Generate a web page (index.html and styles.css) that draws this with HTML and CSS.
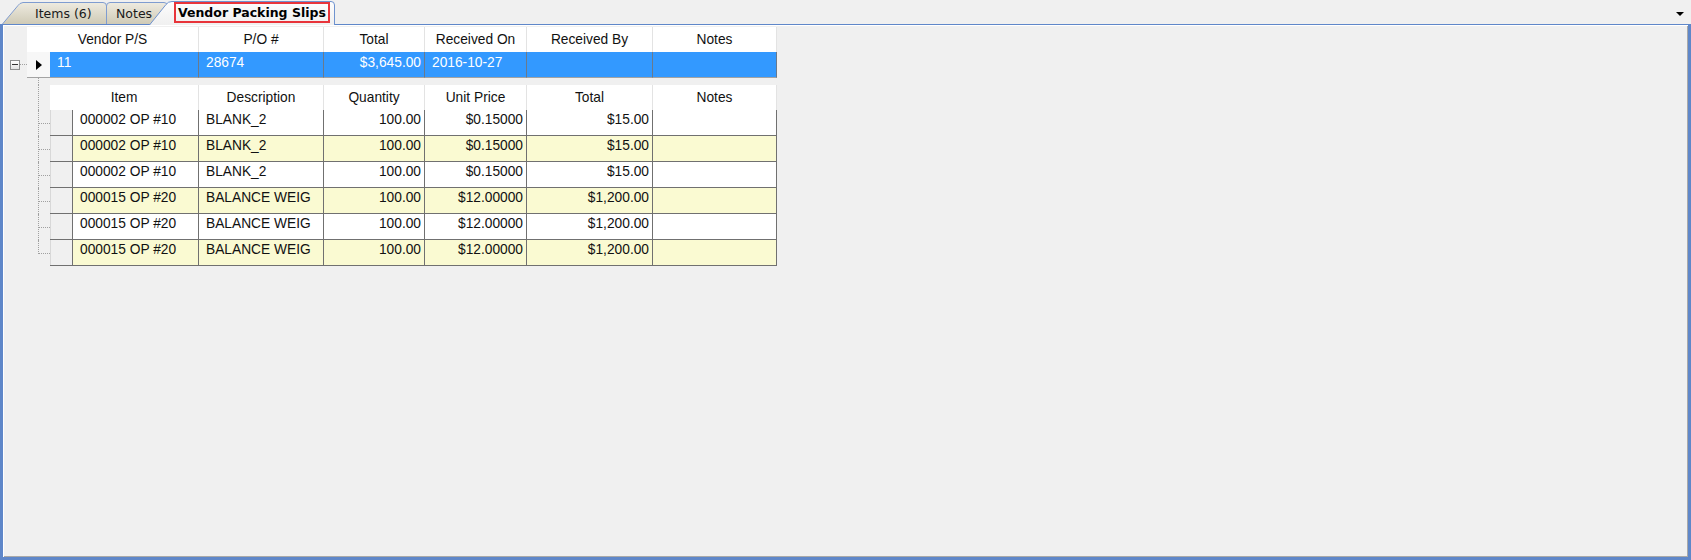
FILE: index.html
```html
<!DOCTYPE html>
<html lang="en">
<head>
  <meta charset="UTF-8">
  <meta name="viewport" content="width=device-width, initial-scale=1">
  <link rel="stylesheet" href="styles.css">
  <title>Vendor Packing Slips</title>
</head>
<body>
<div class="tabstrip">
  <div class="tab tab-items">
    <svg class="tab-shape" viewBox="0 0 105 22" preserveAspectRatio="none">
      <defs><linearGradient id="gItems" x1="0" y1="0" x2="0" y2="1"><stop offset="0" stop-color="#eeebe0"/><stop offset="1" stop-color="#cfcab6"/></linearGradient></defs>
      <path d="M0.5 22 L16 3.5 Q17.5 1 21 0.5 L101 0.5 Q104.5 0.5 104.5 4 L104.5 22" fill="url(#gItems)" stroke="#7f9cd0"/>
    </svg>
    <span class="tab-label">Items (6)</span>
  </div>
  <div class="tab tab-notes">
    <svg class="tab-shape" viewBox="0 0 62 22" preserveAspectRatio="none">
      <defs><linearGradient id="gNotes" x1="0" y1="0" x2="0" y2="1"><stop offset="0" stop-color="#eeebe0"/><stop offset="1" stop-color="#cfcab6"/></linearGradient></defs>
      <path d="M0.5 22 V4 Q0.5 0.5 4 0.5 H58 Q61.5 0.5 61.5 4 V22" fill="url(#gNotes)" stroke="#7f9cd0"/>
    </svg>
    <span class="tab-label">Notes</span>
  </div>
  <div class="tab tab-active">
    <svg class="tab-shape" viewBox="0 0 186 24" preserveAspectRatio="none">
      <defs><linearGradient id="gActive" x1="0" y1="0" x2="0" y2="1"><stop offset="0" stop-color="#fdfdfd"/><stop offset="1" stop-color="#f0f0f0"/></linearGradient></defs>
      <path d="M0.5 24 L17 3.5 Q19 0.5 23 0.5 H182 Q185.5 0.5 185.5 4 V24" fill="url(#gActive)" stroke="#6f93cf"/>
    </svg>
    <span class="tab-label">Vendor Packing Slips</span>
  </div>
  <span class="tab-menu"></span>
</div>

<div class="tab-page">
  <div class="master">
    <div class="expander"><span class="expand-box"></span><span class="tree-h"></span></div>
    <div class="mgrid">
      <div class="hcell wide">Vendor P/S</div>
      <div class="hcell">P/O #</div>
      <div class="hcell">Total</div>
      <div class="hcell">Received On</div>
      <div class="hcell">Received By</div>
      <div class="hcell">Notes</div>

      <div class="rowhead current"><span class="arrow"></span></div>
      <div class="mcell">11</div>
      <div class="mcell">28674</div>
      <div class="mcell num">$3,645.00</div>
      <div class="mcell">2016-10-27</div>
      <div class="mcell"></div>
      <div class="mcell"></div>
    </div>
  </div>

  <div class="detail">
    <div class="dline gap"><span class="tree"></span></div>
    <div class="dline">
      <span class="tree"></span>
      <div class="hcell wide">Item</div>
      <div class="hcell">Description</div>
      <div class="hcell">Quantity</div>
      <div class="hcell">Unit Price</div>
      <div class="hcell">Total</div>
      <div class="hcell">Notes</div>
    </div>
    <div class="dline">
      <span class="tree branch"></span>
      <div class="rowhead"></div>
      <div class="dcell">000002 OP #10</div>
      <div class="dcell">BLANK_2</div>
      <div class="dcell num">100.00</div>
      <div class="dcell num">$0.15000</div>
      <div class="dcell num">$15.00</div>
      <div class="dcell"></div>
    </div>
    <div class="dline alt">
      <span class="tree branch"></span>
      <div class="rowhead"></div>
      <div class="dcell">000002 OP #10</div>
      <div class="dcell">BLANK_2</div>
      <div class="dcell num">100.00</div>
      <div class="dcell num">$0.15000</div>
      <div class="dcell num">$15.00</div>
      <div class="dcell"></div>
    </div>
    <div class="dline">
      <span class="tree branch"></span>
      <div class="rowhead"></div>
      <div class="dcell">000002 OP #10</div>
      <div class="dcell">BLANK_2</div>
      <div class="dcell num">100.00</div>
      <div class="dcell num">$0.15000</div>
      <div class="dcell num">$15.00</div>
      <div class="dcell"></div>
    </div>
    <div class="dline alt">
      <span class="tree branch"></span>
      <div class="rowhead"></div>
      <div class="dcell">000015 OP #20</div>
      <div class="dcell">BALANCE WEIG</div>
      <div class="dcell num">100.00</div>
      <div class="dcell num">$12.00000</div>
      <div class="dcell num">$1,200.00</div>
      <div class="dcell"></div>
    </div>
    <div class="dline">
      <span class="tree branch"></span>
      <div class="rowhead"></div>
      <div class="dcell">000015 OP #20</div>
      <div class="dcell">BALANCE WEIG</div>
      <div class="dcell num">100.00</div>
      <div class="dcell num">$12.00000</div>
      <div class="dcell num">$1,200.00</div>
      <div class="dcell"></div>
    </div>
    <div class="dline alt">
      <span class="tree branch last"></span>
      <div class="rowhead"></div>
      <div class="dcell">000015 OP #20</div>
      <div class="dcell">BALANCE WEIG</div>
      <div class="dcell num">100.00</div>
      <div class="dcell num">$12.00000</div>
      <div class="dcell num">$1,200.00</div>
      <div class="dcell"></div>
    </div>
  </div>
</div>
</body>
</html>
```

FILE: styles.css
```css
* {
  margin: 0;
  padding: 0;
  box-sizing: border-box;
}
html, body {
  width: 1691px;
  height: 560px;
  overflow: hidden;
}
body {
  background: #f0f0f0;
  font-family: "Liberation Sans", Arial, sans-serif;
  font-size: 13.75px;
  color: #111;
  display: flex;
  flex-direction: column;
}

/* tab strip */
.tabstrip {
  height: 24px;
  display: flex;
  align-items: flex-end;
  padding-left: 2px;
  position: relative;
  z-index: 1;
}
.tab {
  position: relative;
  height: 22px;
  display: flex;
  align-items: center;
  font-family: "DejaVu Sans", Verdana, sans-serif;
  font-size: 12.5px;
  color: #1a1a1a;
}
.tab-shape {
  position: absolute;
  left: 0;
  top: 0;
  width: 100%;
  height: 100%;
}
.tab-label {
  position: relative;
}
.tab-items {
  width: 105px;
  padding-left: 33px;
  padding-top: 1px;
  z-index: 2;
}
.tab-notes {
  width: 62px;
  margin-left: -1px;
  padding-left: 10px;
  padding-top: 1px;
  z-index: 1;
}
.tab-active {
  width: 186px;
  height: 24px;
  margin-left: -19px;
  margin-bottom: -1px;
  padding-left: 25px;
  align-items: flex-start;
  z-index: 3;
}
.tab-active .tab-label {
  margin-top: 1px;
  height: 21px;
  padding: 0 2px;
  line-height: 17px;
  font-weight: bold;
  color: #000;
  border: 2px solid #e8343a;
}
.tab-menu {
  margin-left: auto;
  margin-right: 7px;
  align-self: flex-start;
  margin-top: 12px;
  border-top: 4px solid #000;
  border-left: 4px solid transparent;
  border-right: 4px solid transparent;
}

/* tab page */
.tab-page {
  flex: 1;
  border: 3px solid #5f87c9;
  border-top: 1px solid #5f87c9;
  background: #f0f0f0;
  box-shadow: inset 1px 1px #fff, inset -1px -1px #a9a9a9;
  padding-top: 2px;
}
.master {
  display: flex;
}
.expander {
  width: 24px;
  height: 25px;
  margin-top: 25px;
  padding-left: 7px;
  display: flex;
  align-items: center;
}
.expand-box {
  width: 10px;
  height: 10px;
  border: 1px solid #8e8f8f;
  background: linear-gradient(#fff, #e2e2e2);
  position: relative;
}
.expand-box::after {
  content: "";
  position: absolute;
  left: 1px;
  right: 1px;
  top: 3px;
  height: 1px;
  background: #333;
}
.tree-h {
  flex: 1;
  border-top: 1px dotted #a0a0a0;
}

.mgrid {
  display: grid;
  grid-template-columns: 23px 149px 125px 101px 102px 126px 124px;
}
.hcell {
  height: 25px;
  background: #fff;
  border-right: 1px solid #e3e3e3;
  display: flex;
  align-items: center;
  justify-content: center;
  white-space: nowrap;
}
.hcell.wide {
  grid-column: span 2;
}
.rowhead {
  background: #f0f0f0;
  border-right: 1px solid #707070;
  border-bottom: 1px solid #707070;
  box-shadow: inset 1px 0 #d8d8d8;
}
.rowhead.current {
  background: #f7f7f7;
  border-right: none;
  border-bottom: 1px solid #a3a3a3;
  box-shadow: none;
  display: flex;
  align-items: center;
  padding-left: 9px;
}
.arrow {
  border-left: 6px solid #000;
  border-top: 5px solid transparent;
  border-bottom: 5px solid transparent;
}
.mcell {
  height: 26px;
  padding: 3px 7px 0;
  line-height: 16px;
  background: #3399ff;
  color: #fff;
  border-right: 1px solid #6a7a8c;
  border-bottom: 1px solid #a3a3a3;
  white-space: nowrap;
}

/* detail rows */
.detail {
  margin-left: 35px;
}
.dline {
  display: grid;
  grid-template-columns: 12px 23px 126px 125px 101px 102px 126px 124px;
}
.dline.gap {
  height: 7px;
}
.tree {
  position: relative;
  border-left: 1px dotted #a0a0a0;
}
.tree.branch::after {
  content: "";
  position: absolute;
  left: 0;
  right: 0;
  top: 13px;
  border-top: 1px dotted #a0a0a0;
}
.tree.last {
  border-left: none;
}
.tree.last::before {
  content: "";
  position: absolute;
  left: 0;
  top: 0;
  height: 14px;
  border-left: 1px dotted #a0a0a0;
}
.dcell {
  height: 26px;
  padding: 2px 7px 0;
  line-height: 16px;
  background: #fff;
  border-right: 1px solid #707070;
  border-bottom: 1px solid #707070;
  white-space: nowrap;
  overflow: hidden;
}
.alt .dcell {
  background: #fafad2;
}
.num {
  text-align: right;
  padding-right: 3px;
}
```
